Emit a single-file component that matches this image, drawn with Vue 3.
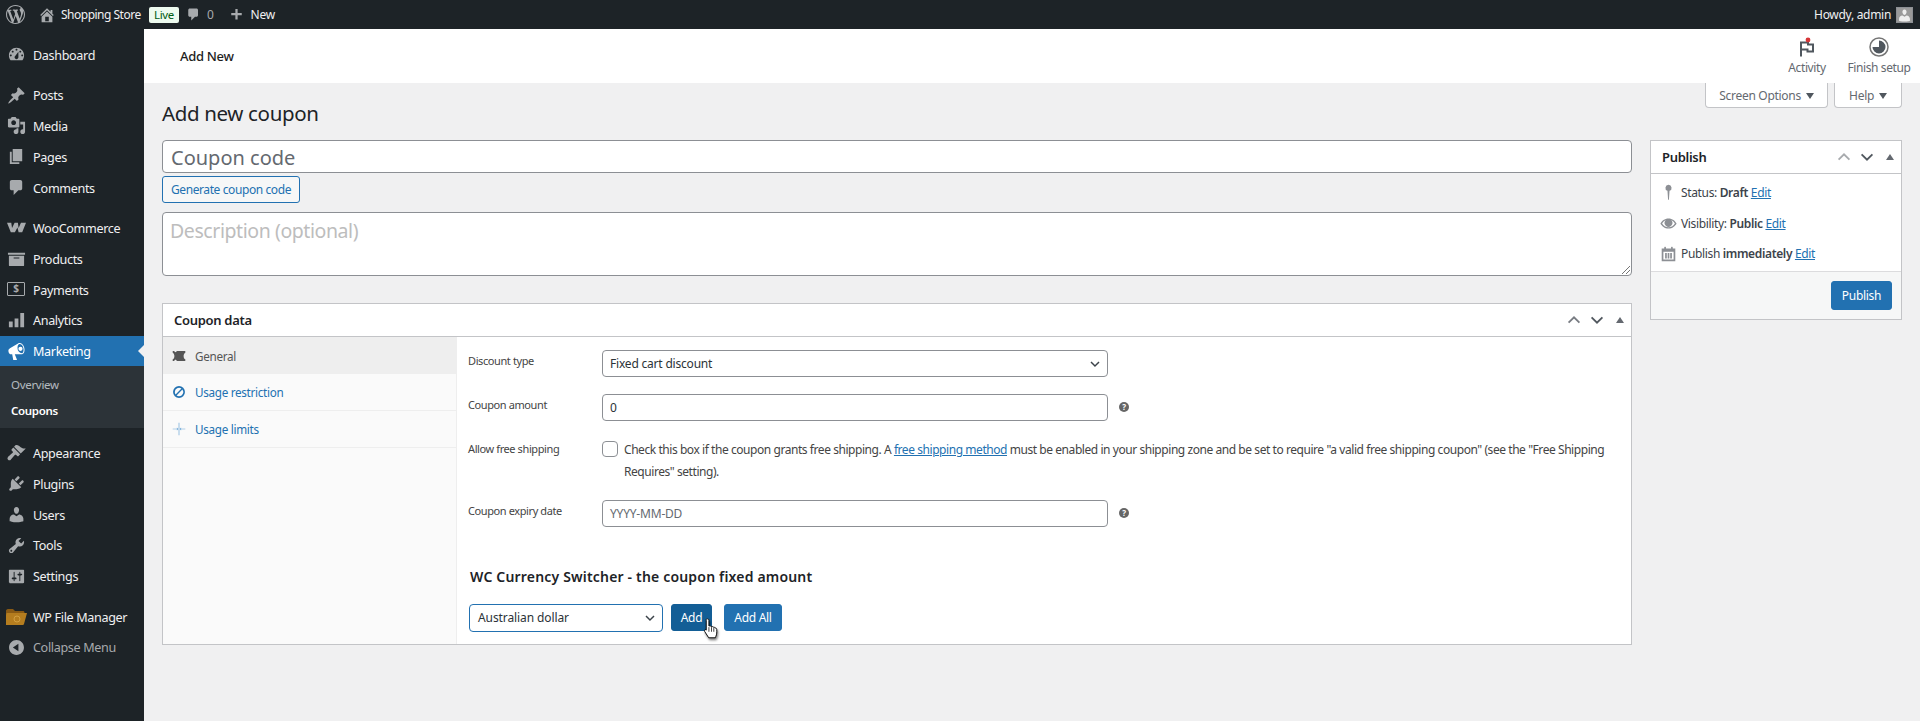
<script setup>
const icons = {
  dash: 'M3.76 16h12.48c1.1-1.37 1.76-3.11 1.76-5 0-4.42-3.58-8-8-8s-8 3.58-8 8c0 1.89.66 3.63 1.76 5zM10 4c.55 0 1 .45 1 1s-.45 1-1 1-1-.45-1-1 .45-1 1-1zM6 6c.55 0 1 .45 1 1s-.45 1-1 1-1-.45-1-1 .45-1 1-1zm8 0c.55 0 1 .45 1 1s-.45 1-1 1-1-.45-1-1 .45-1 1-1zm-5.37 5.55L12 7v6c0 1.1-.9 2-2 2s-2-.9-2-2c0-.57.24-1.08.63-1.45zM4 10c.55 0 1 .45 1 1s-.45 1-1 1-1-.45-1-1 .45-1 1-1zm12 0c.55 0 1 .45 1 1s-.45 1-1 1-1-.45-1-1 .45-1 1-1z',
  post: 'M10.44 3.02l1.82-1.82 6.36 6.35-1.83 1.82c-1.05-.68-2.48-.57-3.41.36l-.75.75c-.92.93-1.04 2.35-.35 3.41l-1.83 1.82-2.41-2.41-2.8 2.79c-.42.42-3.38 2.71-3.8 2.29s1.86-3.39 2.28-3.81l2.79-2.79L4.1 9.36l1.83-1.82c1.05.69 2.48.57 3.4-.36l.75-.75c.93-.92 1.05-2.35.36-3.41z',
  media: 'M13 11V4c0-.55-.45-1-1-1h-1.67L9 1H5L3.67 3H2c-.55 0-1 .45-1 1v7c0 .55.45 1 1 1h10c.55 0 1-.45 1-1zM7 4.5c1.38 0 2.5 1.12 2.5 2.5S8.38 9.5 7 9.5 4.5 8.38 4.5 7 5.62 4.5 7 4.5zM14 6h5v10.5c0 1.38-1.12 2.5-2.5 2.5S14 17.88 14 16.5s1.12-2.5 2.5-2.5c.17 0 .34.02.5.05V9h-3V6zm-4 8.05V13h2v3.5c0 1.38-1.12 2.5-2.5 2.5S7 17.88 7 16.5 8.12 14 9.5 14c.17 0 .34.02.5.05z',
  page: 'M6 15V2h10v13H6zm-1 1h8v2H3V5h2v11z',
  comment: 'M5 2h9c1.1 0 2 .9 2 2v7c0 1.1-.9 2-2 2h-2l-5 5v-5H5c-1.1 0-2-.9-2-2V4c0-1.1.9-2 2-2z',
  woo: 'M0 5h4.500l.8 5.500L8 5h3.500l.7 5.500L14.700 5H20l-4 10h-3.800l-1.200-5-2.700 5H4z',
  archive: 'M19 4v2H1V4h18zM2 7h16v10c0 .55-.45 1-1 1H3c-.55 0-1-.45-1-1V7zm11 3V9H7v1h6z',
  chart: 'M2 17h4v-6H2zM8 17h4V8H8zM14 17h4V2h-4z',
  mega: 'M18.15 5.94c.46 1.62.38 3.22-.02 4.48-.42 1.28-1.26 2.18-2.3 2.48-.16.06-.26.06-.4.06-.06.02-.12.02-.18.02-.06.02-.14.02-.22.02H8.2l2.22 5.5c.02.14-.06.26-.14.34-.08.1-.24.16-.34.16H6.95c-.1 0-.26-.06-.34-.16-.08-.08-.16-.2-.14-.34l-1-5.5H4.25l-.02-.02c-.5.06-1.08-.18-1.54-.62s-.88-1.08-1.06-1.88c-.24-.8-.2-1.56-.02-2.2.18-.62.58-1.08 1.06-1.3l.02-.02 9-5.4c.1-.06.18-.1.24-.16.06-.04.14-.08.24-.12.16-.08.28-.12.5-.18 1.04-.3 2.24.1 3.22.98s1.84 2.24 2.26 3.86zm-2.58 5.98c.4-.1.74-.34 1.04-.7.58-.7.86-1.76.86-3.04 0-.64-.1-1.3-.26-1.96-.34-1.32-1.02-2.48-1.78-3.24s-1.68-1.1-2.46-.88c-.82.22-1.38.96-1.7 2-.32 1.04-.34 2.36 0 3.68.18.68.44 1.26.76 1.8.32.52.68.98 1.08 1.28.4.32.8.52 1.24.6.24.06.5.02.74 0zM14.2 5a2.2 2.2 0 1 1 .01 4.4A2.2 2.2 0 0 1 14.2 5z',
  brush: 'M14.48 11.06L7.41 3.99l1.5-1.5c.5-.56 2.3-.47 3.51.32 1.21.8 1.43 1.28 2.91 2.1 1.18.64 2.45 1.26 4.45.85zm-.71.71L6.7 4.7 4.93 6.47c-.39.39-.39 1.02 0 1.41l1.06 1.06c.39.39.39 1.03 0 1.42-.6.6-4.2 3.6-4.9 4.3-.8.8-.8 2.1 0 2.9.8.8 2.1.8 2.9 0 .7-.7 3.7-4.3 4.3-4.9.39-.39 1.03-.39 1.42 0l1.06 1.06c.39.39 1.02.39 1.41 0z',
  plug: 'M13.11 4.36L9.87 7.6 8 5.73l3.24-3.24c.35-.34 1.05-.2 1.56.32.52.51.66 1.21.31 1.55zm-8 1.77l.91-1.12 9.01 9.01-1.19.84c-.71.71-2.63 1.16-3.82 1.16H6.14L4.9 17.26c-.59.59-1.54.59-2.12 0-.59-.58-.59-1.53 0-2.12l1.24-1.24v-3.88c0-1.13.4-3.19 1.09-3.89zm7.26 3.97l3.24-3.24c.34-.35 1.04-.21 1.55.31.52.51.66 1.21.31 1.55l-3.24 3.25z',
  user: 'M10 9.25c-2.27 0-2.73-3.44-2.73-3.44C7 4.02 7.82 2 9.97 2c2.16 0 2.98 2.02 2.71 3.81 0 0-.41 3.44-2.68 3.44zm0 2.57L12.72 10c2.39 0 4.52 2.33 4.52 4.53v2.49s-3.65 1.13-7.24 1.13c-3.65 0-7.24-1.13-7.24-1.13v-2.49c0-2.25 1.94-4.48 4.47-4.48z',
  tool: 'M16.68 9.77c-1.34 1.34-3.3 1.67-4.95.99l-5.41 6.52c-.99.99-2.59.99-3.58 0s-.99-2.59 0-3.57l6.52-5.42c-.68-1.65-.35-3.61.99-4.95 1.28-1.28 3.12-1.62 4.72-1.06l-2.89 2.89 2.82 2.82 2.86-2.87c.53 1.58.18 3.39-1.08 4.65zM3.81 16.21c.4.39 1.04.39 1.43 0 .4-.4.4-1.04 0-1.43-.39-.4-1.03-.4-1.43 0-.39.39-.39 1.03 0 1.43z',
  settings: 'M18 16V4c0-.55-.45-1-1-1H3c-.55 0-1 .45-1 1v12c0 .55.45 1 1 1h14c.55 0 1-.45 1-1zM8 11h1c.55 0 1 .45 1 1s-.45 1-1 1H8v1.5c0 .28-.22.5-.5.5s-.5-.22-.5-.5V13H6c-.55 0-1-.45-1-1s.45-1 1-1h1V5.5c0-.28.22-.5.5-.5s.5.22.5.5V11zm5-2h-1c-.55 0-1-.45-1-1s.45-1 1-1h1V5.5c0-.28.22-.5.5-.5s.5.22.5.5V7h1c.55 0 1 .45 1 1s-.45 1-1 1h-1v5.5c0 .28-.22.5-.5.5s-.5-.22-.5-.5V9z',
  collapse: 'M10 2.16c4.33 0 7.84 3.51 7.84 7.84s-3.51 7.84-7.84 7.84S2.16 14.33 2.16 10 5.71 2.16 10 2.16zm2 11.72V6.12L6.18 9.97z',
  home: 'M16 8.5l1.53 1.53-1.06 1.06L10 4.62l-6.47 6.47-1.06-1.06L10 2.5l4 4v-2h2v4zm-6-2.46l6 5.99V18H4v-5.97zM12 17v-5H8v5h4z',
  plus: 'M17 8v3h-5.5v5.5h-3V11H3V8h5.5V2.5h3V8z',
  wp: 'M20 10c0-5.51-4.49-10-10-10C4.48 0 0 4.49 0 10c0 5.52 4.48 10 10 10 5.51 0 10-4.48 10-10zM7.78 15.37L4.37 6.22c.55-.02 1.17-.08 1.17-.08.5-.06.44-1.13-.06-1.11 0 0-1.45.11-2.37.11-.18 0-.37 0-.58-.01C4.12 2.69 6.87 1.11 10 1.11c2.33 0 4.45.87 6.05 2.34-.68-.11-1.65.39-1.65 1.58 0 .74.45 1.36.9 2.1.35.61.55 1.36.55 2.46 0 1.49-1.4 5-1.4 5l-3.03-8.37c.54-.02.82-.17.82-.17.5-.05.44-1.25-.06-1.22 0 0-1.44.12-2.38.12-.87 0-2.33-.12-2.33-.12-.5-.03-.56 1.2-.06 1.22l.92.08 1.26 3.41zM17.41 10c.24-.64.74-1.87.43-4.25.7 1.29 1.05 2.71 1.05 4.25 0 3.29-1.73 6.24-4.4 7.78.97-2.59 1.94-5.2 2.92-7.78zM6.1 18.09C3.12 16.65 1.11 13.53 1.11 10c0-1.3.23-2.48.72-3.59C3.25 10.3 4.67 14.2 6.1 18.09zm4.03-6.63l2.58 6.98c-.86.29-1.76.45-2.71.45-.79 0-1.57-.11-2.29-.33.81-2.38 1.62-4.74 2.42-7.1z',
  ticket: 'M1 3h2.2c.2 1 1 1.6 1.8 1.6S6.6 4 6.8 3H19v2.2c-1.4.6-2.4 2.2-2.4 4.8s1 4.2 2.4 4.8V17H6.8c-.2-1-1-1.6-1.8-1.6S3.4 16 3.2 17H1V14.8C2.4 14.2 3.4 12.6 3.4 10S2.4 5.8 1 5.2z',
  ban: 'M10 1.5a8.5 8.5 0 1 0 0 17 8.5 8.5 0 0 0 0-17zM4 10a6 6 0 0 1 9.5-4.9l-8.4 8.4A6 6 0 0 1 4 10zm6 6a6 6 0 0 1-3.5-1.1l8.4-8.4A6 6 0 0 1 10 16z',
  limit: 'M9.5 1h1v18h-1zM1 9.5h6V8l2 2-2 2v-1.500H1zM19 9.500h-6V8l-2 2 2 2v-1.500h6z',
  pin: 'M10 1a3.600 3.600 0 0 1 1.200 7l-.7 10.500h-1L8.800 8A3.600 3.600 0 0 1 10 1z',
  eye: 'M10 4C5.500 4 2 7 .5 10 2 13 5.500 16 10 16s8-3 9.500-6C18 7 14.500 4 10 4zm0 10.500C6.700 14.500 4 12.500 2.500 10 3.500 8.400 5 7.100 6.800 6.300A4.500 4.500 0 1 0 13.200 6.300C15 7.100 16.500 8.400 17.500 10 16 12.500 13.300 14.500 10 14.500z',
  cal: 'M15 4h3v15H2V4h3V3c0-.41.41-1 1-1s1 .59 1 1v1h6V3c0-.41.41-1 1-1s1 .59 1 1v1zM4 8v9h12V8H4zm2 1.500h2V16H6zm3 0h2V16H9zm3 0h2V16h-2z'
}

const groupA = [{ label: 'Dashboard', icon: 'dash' }]
const groupB = [
  { label: 'Posts', icon: 'post' },
  { label: 'Media', icon: 'media' },
  { label: 'Pages', icon: 'page' },
  { label: 'Comments', icon: 'comment' }
]
const groupC = [
  { label: 'WooCommerce', icon: 'woo' },
  { label: 'Products', icon: 'archive' },
  { label: 'Payments', icon: 'pay' },
  { label: 'Analytics', icon: 'chart' }
]
const groupD = [
  { label: 'Appearance', icon: 'brush' },
  { label: 'Plugins', icon: 'plug' },
  { label: 'Users', icon: 'user' },
  { label: 'Tools', icon: 'tool' },
  { label: 'Settings', icon: 'settings' }
]
</script>

<template>
  <div class="page">
    <header class="adminbar">
      <svg class="ab-logo" viewBox="0 0 20 20"><path :d="icons.wp" /></svg>
      <svg class="ab-home" viewBox="0 0 20 20"><path :d="icons.home" /></svg>
      <span class="ab-site">Shopping Store</span>
      <span class="ab-live">Live</span>
      <svg class="ab-comment" viewBox="0 0 20 20"><path :d="icons.comment" /></svg>
      <span class="ab-count">0</span>
      <svg class="ab-plus" viewBox="0 0 20 20"><path :d="icons.plus" /></svg>
      <span class="ab-new">New</span>
      <span class="ab-howdy">Howdy, admin</span>
      <span class="ab-avatar">
        <svg viewBox="0 0 20 20"><path :d="icons.user" /></svg>
      </span>
    </header>

    <div class="shell">
      <nav class="sidebar">
        <div class="nav-group">
          <a class="nav-item" v-for="it in groupA" :key="it.label">
            <svg class="nav-ico" viewBox="0 0 20 20"><path :d="icons[it.icon]" /></svg>
            <span>{{ it.label }}</span>
          </a>
        </div>
        <div class="nav-group">
          <a class="nav-item" v-for="it in groupB" :key="it.label">
            <svg class="nav-ico" viewBox="0 0 20 20"><path :d="icons[it.icon]" /></svg>
            <span>{{ it.label }}</span>
          </a>
        </div>
        <div class="nav-group">
          <a class="nav-item" v-for="it in groupC" :key="it.label">
            <span v-if="it.icon === 'pay'" class="pay-ico">$</span>
            <svg v-else class="nav-ico" viewBox="0 0 20 20"><path :d="icons[it.icon]" /></svg>
            <span>{{ it.label }}</span>
          </a>
          <a class="nav-item current">
            <svg class="nav-ico" viewBox="0 0 20 20"><path :d="icons.mega" fill-rule="evenodd" /></svg>
            <span>Marketing</span>
            <i class="arrow"></i>
          </a>
          <div class="submenu">
            <a class="sub-item">Overview</a>
            <a class="sub-item strong">Coupons</a>
          </div>
        </div>
        <div class="nav-group">
          <a class="nav-item" v-for="it in groupD" :key="it.label">
            <svg class="nav-ico" viewBox="0 0 20 20"><path :d="icons[it.icon]" fill-rule="evenodd" /></svg>
            <span>{{ it.label }}</span>
          </a>
        </div>
        <div class="nav-group">
          <a class="nav-item">
            <svg class="folder-ico" viewBox="0 0 21 17">
              <path d="M0 3c0-1 .7-2 2-2h5l2 2h8c1 0 1.500.6 1.500 1.500V6H0z" fill="#8a5a14" />
              <path d="M0 17V6.500C0 5.700.6 5 1.500 5H21l-3 11c-.2.6-.6 1-1.300 1z" fill="#b57d1f" />
              <circle cx="11" cy="11" r="3" fill="none" stroke="#d9a84a" stroke-width=".8" />
            </svg>
            <span>WP File Manager</span>
          </a>
          <a class="nav-item collapse">
            <svg class="nav-ico" viewBox="0 0 20 20"><path :d="icons.collapse" /></svg>
            <span>Collapse Menu</span>
          </a>
        </div>
      </nav>

      <main class="main">
        <div class="topbar">
          <span class="topbar-title">Add New</span>
          <div class="topbar-actions">
            <div class="top-act activity">
              <svg class="flag" viewBox="0 0 16 20" width="16" height="20">
                <path d="M2 19.500V5.500h7v2h5v7H8.500v-2H2" fill="none" stroke="#50575e" stroke-width="2" />
                <circle cx="9" cy="3" r="2.400" fill="#d63638" />
              </svg>
              <span>Activity</span>
            </div>
            <div class="top-act finish">
              <svg viewBox="0 0 20 20" width="20" height="20">
                <circle cx="10" cy="10" r="9" fill="none" stroke="#757575" stroke-width="1.500" />
                <path d="M10 3.500a6.500 6.500 0 1 1-6.500 6.500H10z" fill="#50575e" />
              </svg>
              <span>Finish setup</span>
            </div>
          </div>
        </div>

        <div class="content">
          <div class="head-row">
            <h1>Add new coupon</h1>
            <div class="screen-links">
              <button class="tab-btn wide">Screen Options <i class="caret"></i></button>
              <button class="tab-btn">Help <i class="caret"></i></button>
            </div>
          </div>

          <div class="columns">
            <div class="col-main">
              <input class="title-input" placeholder="Coupon code" />
              <button class="gen-btn">Generate coupon code</button>
              <div class="desc">Description (optional)<span class="grip"></span></div>

              <section class="box data-box">
                <div class="box-head">
                  <h2>Coupon data</h2>
                  <div class="handles">
                    <svg viewBox="0 0 20 20"><path d="M4 13l6-6 6 6" fill="none" stroke="#787c82" stroke-width="2" /></svg>
                    <svg viewBox="0 0 20 20"><path d="M4 7l6 6 6-6" fill="none" stroke="#50575e" stroke-width="2" /></svg>
                    <i class="tri"></i>
                  </div>
                </div>
                <div class="data-body">
                  <ul class="tabs">
                    <li class="tab active">
                      <svg viewBox="0 0 20 20"><path :d="icons.ticket" /></svg>
                      <span>General</span>
                    </li>
                    <li class="tab">
                      <svg viewBox="0 0 20 20"><path :d="icons.ban" fill-rule="evenodd" /></svg>
                      <span>Usage restriction</span>
                    </li>
                    <li class="tab">
                      <svg class="pale" viewBox="0 0 20 20"><path :d="icons.limit" /></svg>
                      <span>Usage limits</span>
                    </li>
                  </ul>
                  <div class="panel">
                    <div class="field f1">
                      <label>Discount type</label>
                      <div class="control select">Fixed cart discount
                        <svg class="chev" viewBox="0 0 20 20"><path d="M5 7.500l5 5 5-5" fill="none" stroke="#3c434a" stroke-width="1.800" /></svg>
                      </div>
                    </div>
                    <div class="field f2">
                      <label>Coupon amount</label>
                      <div class="control">0</div>
                      <i class="help">?</i>
                    </div>
                    <div class="field f3">
                      <label>Allow free shipping</label>
                      <div class="check-wrap">
                        <span class="check"></span>
                        <p>Check this box if the coupon grants free shipping. A <a>free shipping method</a> must be enabled in your shipping zone and be set to require "a valid free shipping coupon" (see the "Free Shipping Requires" setting).</p>
                      </div>
                    </div>
                    <div class="field f4">
                      <label>Coupon expiry date</label>
                      <div class="control ph">YYYY-MM-DD</div>
                      <i class="help">?</i>
                    </div>
                    <h3>WC Currency Switcher - the coupon fixed amount</h3>
                    <div class="currency">
                      <div class="cur-select">Australian dollar
                        <svg class="chev" viewBox="0 0 20 20"><path d="M5 7.500l5 5 5-5" fill="none" stroke="#3c434a" stroke-width="1.800" /></svg>
                      </div>
                      <button class="btn dark">Add
                        <svg class="cursor" viewBox="0 0 20 26" width="19" height="24">
                          <path d="M5.500 2c1 0 1.700.7 1.700 1.700v6l1-.1c.9-.1 1.400.3 1.600.8.7-.4 1.700-.1 2 .7.8-.4 1.800 0 2 .9.9-.3 1.800.3 1.900 1.300.1 3 .1 5.500-1 7.700l-.6 1.500H7l-4.500-7c-.7-1.200.8-2.400 1.900-1.400l-.1-.1V3.700C3.800 2.700 4.500 2 5.500 2z" fill="#fff" stroke="#000" stroke-width="1" />
                          <path d="M7.200 11v5M10 11v5M12.500 12v4" stroke="#000" stroke-width=".8" fill="none" />
                        </svg>
                      </button>
                      <button class="btn">Add All</button>
                    </div>
                  </div>
                </div>
              </section>
            </div>

            <aside class="col-side">
              <section class="box pub-box">
                <div class="box-head">
                  <h2>Publish</h2>
                  <div class="handles">
                    <svg viewBox="0 0 20 20"><path d="M4 13l6-6 6 6" fill="none" stroke="#a7aaad" stroke-width="2" /></svg>
                    <svg viewBox="0 0 20 20"><path d="M4 7l6 6 6-6" fill="none" stroke="#50575e" stroke-width="2" /></svg>
                    <i class="tri"></i>
                  </div>
                </div>
                <div class="pub-rows">
                  <div class="pub-row">
                    <svg viewBox="0 0 20 20"><path :d="icons.pin" /></svg>
                    <span>Status: <b>Draft</b> <a>Edit</a></span>
                  </div>
                  <div class="pub-row">
                    <svg viewBox="0 0 20 20"><path :d="icons.eye" fill-rule="evenodd" /></svg>
                    <span>Visibility: <b>Public</b> <a>Edit</a></span>
                  </div>
                  <div class="pub-row">
                    <svg viewBox="0 0 20 20"><path :d="icons.cal" fill-rule="evenodd" /></svg>
                    <span>Publish <b>immediately</b> <a>Edit</a></span>
                  </div>
                </div>
                <div class="pub-foot"><button class="btn pub-btn">Publish</button></div>
              </section>
            </aside>
          </div>
        </div>
      </main>
    </div>
  </div>
</template>

<style>
html, body { margin: 0; background: #f0f0f1; overflow: hidden; }
</style>

<style scoped>
.page {
  --font: "Noto Sans", "Open Sans", "Liberation Sans", sans-serif;
  height: 721px;
  overflow: hidden;
  display: flex;
  flex-direction: column;
  font-family: var(--font);
  font-size: 12px;
  letter-spacing: -.3px;
  color: #3c434a;
  background: #f0f0f1;
}
.adminbar {
  height: 29px;
  flex: none;
  display: flex;
  align-items: center;
  background: #1d2327;
  color: #f0f0f1;
  font-size: 12px;
}
.adminbar svg { fill: #a7aaad; }
.ab-logo { width: 19px; height: 19px; margin-left: 6px; }
.ab-home { width: 18px; height: 18px; margin-left: 13px; }
.ab-site { margin-left: 5px; width: 81px; white-space: nowrap; letter-spacing: -.5px; }
.ab-live {
  margin-left: 7px;
  width: 30px;
  height: 16px;
  line-height: 15px;
  text-align: center;
  background: #edfaef;
  color: #005c12;
  border-radius: 2px;
  font-size: 11.500px;
}
.ab-comment { width: 15px; height: 15px; margin-left: 7px; }
.ab-count { margin-left: 6px; color: #a7aaad; }
.ab-plus { width: 15px; height: 15px; margin-left: 15px; }
.ab-new { margin-left: 7px; }
.ab-howdy { margin-left: auto; }
.ab-avatar {
  width: 17px;
  height: 16px;
  margin: 0 7px 0 5px;
  background: #9a9a9a;
  border: 1px solid #8c8f94;
  box-sizing: border-box;
  overflow: hidden;
}
.ab-avatar svg { display: block; width: 15px; height: 15px; fill: #eee; }

.shell { flex: 1; display: flex; min-height: 0; }
.sidebar {
  width: 144px;
  flex: none;
  background: #1d2327;
  padding-top: 10.200px;
  color: #f0f0f1;
}
.nav-group { margin-bottom: 9.600px; }
.nav-item {
  position: relative;
  height: 30.800px;
  display: flex;
  align-items: center;
  padding-left: 33px;
  font-size: 12.600px;
  letter-spacing: -.35px;
  white-space: nowrap;
}
.nav-item > span:last-of-type { padding-top: 1.500px; }
.nav-ico {
  position: absolute;
  left: 7px;
  top: 6px;
  width: 19px;
  height: 19px;
  fill: #a7aaad;
}
.pay-ico {
  position: absolute;
  left: 7px;
  top: 8px;
  width: 18px;
  height: 14px;
  box-sizing: border-box;
  border: 1.500px solid #a7aaad;
  border-radius: 1px;
  color: #a7aaad;
  font-size: 10px;
  line-height: 11px;
  text-align: center;
  font-weight: 700;
}
.folder-ico { position: absolute; left: 6px; top: 7px; width: 21px; height: 17px; }
.nav-item.current { background: #2271b1; color: #fff; }
.nav-item.current .nav-ico { fill: #fff; }
.arrow {
  position: absolute;
  right: 0;
  top: 9px;
  border: 6.500px solid transparent;
  border-right-color: #f0f0f1;
  border-left: 0;
}
.submenu {
  background: #2c3338;
  height: 61.400px;
  padding-top: 6px;
  box-sizing: border-box;
}
.sub-item {
  display: block;
  height: 25.500px;
  line-height: 25.500px;
  padding-left: 11px;
  font-size: 11.500px;
  color: rgba(240, 246, 252, .7);
}
.sub-item.strong { color: #fff; font-weight: 600; }
.collapse { color: #a7aaad; padding-left: 33px; }

.main { flex: 1; min-width: 0; display: flex; flex-direction: column; }
.topbar {
  height: 54px;
  flex: none;
  background: #fff;
  display: flex;
  align-items: center;
  padding-left: 36px;
}
.topbar-title { font-size: 13px; font-weight: 500; color: #1e1e1e; }
.topbar-actions { margin-left: auto; display: flex; height: 100%; padding-right: 10px; }
.top-act {
  display: flex;
  flex-direction: column;
  align-items: center;
  padding-top: 8px;
  color: #646970;
  font-size: 12px;
  letter-spacing: -.4px;
  white-space: nowrap;
}
.top-act svg { height: 20px; flex: none; }
.top-act span { margin-top: 3px; line-height: 16px; }
.top-act.activity { width: 50px; margin-right: 16px; }
.top-act.finish { width: 62px; }

.content { padding: 0 18px; }
.head-row { height: 57px; display: flex; justify-content: space-between; align-items: flex-start; }
h1 {
  margin: 16px 0 0;
  font-size: 20.500px;
  line-height: 29px;
  font-weight: 400;
  letter-spacing: -.35px;
  color: #1d2327;
}
.screen-links { display: flex; gap: 6px; }
.tab-btn {
  height: 25px;
  width: 68px;
  font: inherit;
  letter-spacing: inherit;
  color: #646970;
  background: #fff;
  border: 1px solid #c3c4c7;
  border-top: 0;
  border-radius: 0 0 4px 4px;
  padding: 0;
}
.tab-btn.wide { width: 123px; }
.caret {
  display: inline-block;
  margin-left: 2px;
  vertical-align: 1px;
  border: 4px solid transparent;
  border-top: 6px solid #50575e;
  border-bottom: 0;
}

.columns { display: flex; gap: 18px; align-items: flex-start; }
.col-main { width: 1470px; flex: none; display: flex; flex-direction: column; align-items: flex-start; }
.col-side { width: 252px; flex: none; }
.title-input {
  width: 100%;
  height: 33px;
  box-sizing: border-box;
  padding: 2px 8px 0;
  border: 1px solid #8c8f94;
  border-radius: 4px;
  background: #fff;
  font: 20px var(--font);
  outline: none;
}
.title-input::placeholder { color: #646970; opacity: 1; }
.gen-btn {
  margin-top: 3px;
  width: 138px;
  height: 27px;
  padding: 0;
  border: 1px solid #2271b1;
  border-radius: 3px;
  background: #f6f7f7;
  color: #2271b1;
  font: inherit;
  letter-spacing: -.4px;
}
.desc {
  position: relative;
  margin-top: 9px;
  width: 100%;
  height: 64px;
  box-sizing: border-box;
  padding: 4px 7px;
  border: 1px solid #8c8f94;
  border-radius: 4px;
  background: #fff;
  color: #bdbdbd;
  font-size: 19.500px;
  letter-spacing: -.42px;
  line-height: 27px;
}
.grip {
  position: absolute;
  right: 1px;
  bottom: 1px;
  width: 10px;
  height: 10px;
  background: repeating-linear-gradient(135deg, transparent 0 2px, #767676 2px 3px);
  clip-path: polygon(100% 0, 100% 100%, 0 100%);
}
.box { background: #fff; border: 1px solid #c3c4c7; box-sizing: border-box; }
.box-head {
  height: 33px;
  box-sizing: border-box;
  border-bottom: 1px solid #c3c4c7;
  display: flex;
  align-items: center;
  justify-content: space-between;
  padding: 0 7px 0 11px;
}
h2 { margin: 0; font-size: 13px; font-weight: 600; color: #1d2327; }
.handles { display: flex; align-items: center; gap: 5.500px; }
.handles svg { width: 18px; height: 18px; }
.tri {
  width: 0;
  height: 0;
  margin-left: 4.500px;
  border: 4px solid transparent;
  border-bottom: 6px solid #646970;
  border-top: 0;
}
.data-box { margin-top: 27px; width: 100%; height: 342px; display: flex; flex-direction: column; }
.data-body { flex: 1; display: flex; min-height: 0; }
.tabs {
  list-style: none;
  margin: 0;
  padding: 0;
  width: 294px;
  flex: none;
  background: #fafafa;
  border-right: 1px solid #eee;
  box-sizing: border-box;
}
.tab {
  height: 37px;
  box-sizing: border-box;
  border-bottom: 1px solid #eee;
  display: flex;
  align-items: center;
  padding-left: 8.500px;
  gap: 9.500px;
  color: #2271b1;
  font-size: 11.700px;
}
.tab svg { width: 14px; height: 14px; fill: #2271b1; }
.tab svg.pale { fill: #6ba6d6; }
.tab.active { background: #eee; color: #555; border-bottom: 0; }
.tab.active svg { fill: #555; }
.panel { flex: 1; position: relative; padding: 0 0 0 11px; min-width: 0; }
.field { display: flex; align-items: flex-start; font-size: 11px; }
.field label { width: 134px; flex: none; color: #444; white-space: nowrap; letter-spacing: -.4px; }
.f1 { margin-top: 13px; }
.f1 label { padding-top: 3px; }
.f2 { margin-top: 17px; }
.f2 label { padding-top: 3px; }
.f3 { margin-top: 20px; }
.f4 { margin-top: 17px; }
.f4 label { padding-top: 3px; }
.control {
  position: relative;
  width: 506px;
  height: 27px;
  box-sizing: border-box;
  border: 1px solid #8c8f94;
  border-radius: 4px;
  background: #fff;
  padding: 0 7px;
  font-size: 12px;
  line-height: 25px;
  letter-spacing: -.2px;
  color: #2c3338;
}
.control.ph { color: #646970; }
.chev { position: absolute; right: 4px; top: 5px; width: 16px; height: 16px; }
.help {
  width: 10px;
  height: 10px;
  margin: 8px 0 0 11px;
  border-radius: 50%;
  background: #666;
  color: #fff;
  font: 700 8px/10px var(--font);
  text-align: center;
}
.check-wrap { display: flex; flex: 1; min-width: 0; padding-right: 16px; }
.check {
  width: 16px;
  height: 16px;
  flex: none;
  box-sizing: border-box;
  border: 1px solid #8c8f94;
  border-radius: 4px;
  background: #fff;
}
.check-wrap p { margin: -2px 0 0 6px; font-size: 12px; line-height: 22px; letter-spacing: -.44px; color: #444; }
.check-wrap a { color: #2271b1; text-decoration: underline; }
h3 {
  margin: 40px 0 0 2px;
  font-size: 14px;
  font-weight: 600;
  line-height: 20px;
  letter-spacing: .18px;
  color: #1d2327;
}
.currency { margin-top: 17px; display: flex; align-items: flex-start; }
.cur-select {
  position: relative;
  width: 194px;
  height: 28px;
  margin-left: 1px;
  box-sizing: border-box;
  border: 1.500px solid #2271b1;
  border-radius: 4px;
  background: #fff;
  padding-left: 8px;
  font-size: 12px;
  line-height: 25px;
  letter-spacing: -.1px;
  color: #2c3338;
}
.btn {
  height: 27px;
  padding: 0;
  border: 1px solid #2271b1;
  border-radius: 3px;
  background: #2271b1;
  color: #fff;
  font: inherit;
  letter-spacing: inherit;
  width: 58px;
  margin-left: 12px;
  position: relative;
}
.btn.dark { width: 41px; margin-left: 8px; background: #135e96; border-color: #135e96; }
.cursor {
  position: absolute;
  left: 30px;
  top: 12px;
  filter: drop-shadow(1px 2px 1px rgba(0, 0, 0, .5));
}

.pub-box { width: 100%; height: 180px; display: flex; flex-direction: column; }
.pub-rows { flex: 1; padding-top: 3.500px; }
.pub-row {
  height: 30.600px;
  display: flex;
  align-items: center;
  padding-left: 9px;
  gap: 4px;
  font-size: 12px;
  letter-spacing: -.35px;
}
.pub-row svg { width: 17px; height: 17px; fill: #8c8f94; flex: none; }
.pub-row b { font-weight: 600; }
.pub-row a { color: #2271b1; text-decoration: underline; }
.pub-foot {
  height: 48px;
  flex: none;
  background: #f6f7f7;
  border-top: 1px solid #dcdcde;
  box-sizing: border-box;
  display: flex;
  justify-content: flex-end;
  align-items: center;
  padding-right: 9px;
}
.pub-btn { width: 61px; height: 29px; margin: 0; }
</style>
